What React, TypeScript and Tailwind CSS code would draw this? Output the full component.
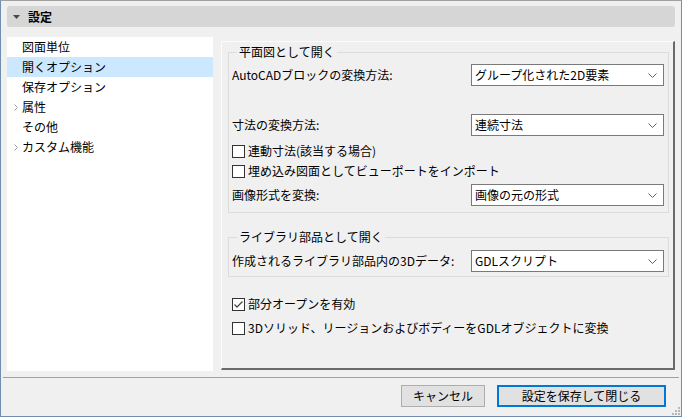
const font = { fontFamily: '"Noto Sans CJK JP", "Noto Sans", sans-serif' };

function Chevron() {
  return (
    <svg width="9" height="5" viewBox="0 0 9 5" className="shrink-0">
      <path d="M0.5 0.5 L4.5 4.5 L8.5 0.5" fill="none" stroke="#606060" strokeWidth="1" />
    </svg>
  );
}

function Select({ value }: { value: string }) {
  return (
    <div className="flex h-[22px] w-[193px] items-center justify-between border border-[#7a7a7a] bg-white pl-[3px] pr-[6px] text-[12px] text-black">
      <span>{value}</span>
      <Chevron />
    </div>
  );
}

function Checkbox({ checked = false }: { checked?: boolean }) {
  return (
    <span className="flex h-[13px] w-[13px] shrink-0 items-center justify-center border border-[#333333] bg-white">
      {checked && (
        <svg width="11" height="11" viewBox="0 0 11 11">
          <path d="M1.5 5.5 L4 8 L9.5 2.5" fill="none" stroke="#4a4a4a" strokeWidth="1.3" />
        </svg>
      )}
    </span>
  );
}

function CheckRow({ label, checked }: { label: string; checked?: boolean }) {
  return (
    <div className="flex h-[20px] items-center gap-[3px] text-[12px]">
      <Checkbox checked={checked} />
      <span>{label}</span>
    </div>
  );
}

function Row({ label, value }: { label: string; value: string }) {
  return (
    <div className="flex h-[22px] items-center justify-between text-[12px]">
      <span>{label}</span>
      <Select value={value} />
    </div>
  );
}

const navItems = [
  { label: "図面単位", arrow: false },
  { label: "開くオプション", arrow: false, selected: true },
  { label: "保存オプション", arrow: false },
  { label: "属性", arrow: true },
  { label: "その他", arrow: false },
  { label: "カスタム機能", arrow: true },
];

export default function App() {
  return (
    <div
      style={font}
      className="flex h-[417px] w-[682px] flex-col overflow-hidden border border-[#6f8fb0] border-t-[#a0a0a0] bg-[#f0f0f0] text-black"
    >
      {/* header */}
      <div className="mx-[6px] mt-[5px] flex h-[21px] items-center rounded-[3px] bg-[#d6d6d6] pl-[6px]">
        <svg width="7" height="4" viewBox="0 0 7 4" className="mr-[8px]">
          <path d="M0 0 L7 0 L3.5 4 Z" fill="#4a4a4a" />
        </svg>
        <span className="text-[12px] font-bold">設定</span>
      </div>

      {/* body */}
      <div className="mx-[6px] mt-[10px] flex h-[334px] gap-[8px]">
        <div className="flex w-[206px] flex-col bg-white">
          {navItems.map((it) => (
            <div
              key={it.label}
              className={`flex h-[20px] items-center text-[12px] ${it.selected ? "bg-[#cce8ff]" : ""}`}
            >
              <span className="flex w-[15px] justify-center pl-[3px]">
                {it.arrow && (
                  <svg width="4" height="7" viewBox="0 0 4 7">
                    <path d="M0.5 0.5 L3.5 3.5 L0.5 6.5" fill="none" stroke="#a0a0a0" strokeWidth="1" />
                  </svg>
                )}
              </span>
              <span>{it.label}</span>
            </div>
          ))}
        </div>

        <div className="mb-[1px] mt-[4px] flex flex-1 flex-col border-b-2 border-l border-r-2 border-t border-b-[#6a6a6a] border-l-[#fbfbfb] border-r-[#6a6a6a] border-t-[#fbfbfb] pl-[6px] pr-[4px]">
          <fieldset className="mt-[2px] border border-[#dcdcdc] pb-[6px] pl-[3px] pr-[4px]">
            <legend className="ml-[5px] px-[2px] text-[12px] leading-[16px]">平面図として開く</legend>
            <div className="mt-[4px] flex flex-col">
              <Row label="AutoCADブロックの変換方法:" value="グループ化された2D要素" />
              <div className="mt-[28px]">
                <Row label="寸法の変換方法:" value="連続寸法" />
              </div>
              <div className="mt-[5px]">
                <CheckRow label="連動寸法(該当する場合)" />
                <CheckRow label="埋め込み図面としてビューポートをインポート" />
              </div>
              <div className="mt-[3px]">
                <Row label="画像形式を変換:" value="画像の元の形式" />
              </div>
            </div>
          </fieldset>

          <fieldset className="mt-[16px] border border-[#dcdcdc] pb-[4px] pl-[3px] pr-[4px]">
            <legend className="ml-[5px] px-[2px] text-[12px] leading-[16px]">ライブラリ部品として開く</legend>
            <div className="mt-[5px]">
              <Row label="作成されるライブラリ部品内の3Dデータ:" value="GDLスクリプト" />
            </div>
          </fieldset>

          <div className="mt-[17px] flex flex-col gap-[4px] pl-[4px]">
            <CheckRow label="部分オープンを有効" checked />
            <CheckRow label="3Dソリッド、リージョンおよびボディーをGDLオブジェクトに変換" />
          </div>
        </div>
      </div>

      {/* separator */}
      <div className="mx-[2px] mt-[6px] h-px bg-[#a0a0a0]" />

      {/* footer */}
      <div className="relative mt-[7px] flex h-[22px] justify-end gap-[12px] pr-[15px]">
        <button className="h-[22px] w-[84px] border border-[#adadad] bg-[#e1e1e1] text-[12px]">キャンセル</button>
        <button className="h-[22px] w-[169px] border-2 border-[#0078d7] bg-[#e1e1e1] text-[12px]">設定を保存して閉じる</button>
        <svg width="9" height="9" viewBox="0 0 9 9" className="absolute bottom-[-8px] right-[1px]">
          <rect x="7" y="1" width="2" height="2" fill="#b8b8b8" />
          <rect x="4" y="4" width="2" height="2" fill="#b8b8b8" />
          <rect x="7" y="4" width="2" height="2" fill="#b8b8b8" />
          <rect x="1" y="7" width="2" height="2" fill="#b8b8b8" />
          <rect x="4" y="7" width="2" height="2" fill="#b8b8b8" />
          <rect x="7" y="7" width="2" height="2" fill="#b8b8b8" />
        </svg>
      </div>
    </div>
  );
}
